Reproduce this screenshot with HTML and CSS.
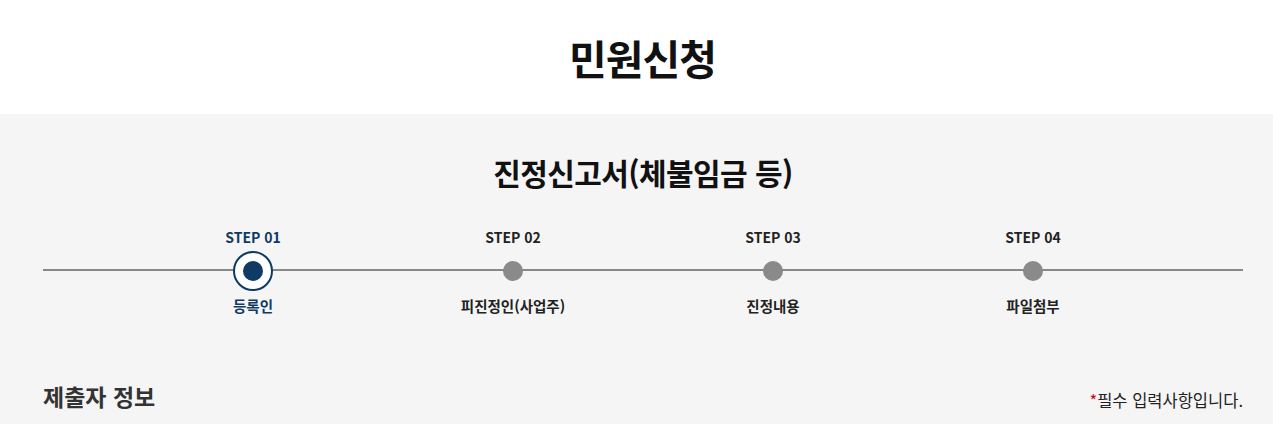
FILE: index.html
```html
<!DOCTYPE html>
<html lang="ko">
<head>
<meta charset="utf-8">
<title>민원신청</title>
<link rel="stylesheet" href="styles.css">
</head>
<body>
<header class="page-head">
  <h1 class="page-title">민원신청</h1>
</header>
<main class="content">
  <div class="wrap">
    <h2 class="form-title">진정신고서(체불임금 등)</h2>
    <ol class="steps">
      <li class="step active">
        <span class="step-num">STEP 01</span>
        <span class="marker"><span class="dot"></span></span>
        <span class="step-name">등록인</span>
      </li>
      <li class="step">
        <span class="step-num">STEP 02</span>
        <span class="marker"><span class="dot"></span></span>
        <span class="step-name">피진정인(사업주)</span>
      </li>
      <li class="step">
        <span class="step-num">STEP 03</span>
        <span class="marker"><span class="dot"></span></span>
        <span class="step-name">진정내용</span>
      </li>
      <li class="step">
        <span class="step-num">STEP 04</span>
        <span class="marker"><span class="dot"></span></span>
        <span class="step-name">파일첨부</span>
      </li>
    </ol>
    <div class="section-head">
      <h3 class="section-title">제출자 정보</h3>
      <p class="required-note"><span class="star">*</span>필수 입력사항입니다.</p>
    </div>
  </div>
</main>
</body>
</html>
```
FILE: styles.css
```css
* { box-sizing: border-box; }
html, body { margin: 0; padding: 0; }
body {
  font-family: "Noto Sans CJK KR", "Noto Sans", sans-serif;
  color: #222;
  background: #f5f5f5;
  height: 424px;
  overflow: hidden;
}
.page-head {
  background: #fff;
  height: 114px;
  display: flex;
  align-items: center;
  justify-content: center;
  padding-left: 12px;
}
.page-title {
  margin: 0;
  font-size: 41px;
  font-weight: 700;
  letter-spacing: -1px;
  color: #111;
  line-height: 1;
}
.content {
  background: #f5f5f5;
}
.wrap {
  width: 1200px;
  margin-left: 43px;
  padding-top: 38px;
}
.form-title {
  margin: 0;
  text-align: center;
  font-size: 30px;
  font-weight: 700;
  color: #111;
  line-height: 40px;
  letter-spacing: -0.6px;
}
.steps {
  list-style: none;
  margin: 0;
  padding: 0 80px;
  margin-top: 34px;
  display: flex;
  position: relative;
}
.steps::before {
  content: "";
  position: absolute;
  left: 0;
  right: 0;
  top: 43px;
  height: 2px;
  background: #888;
}
.step {
  flex: 1;
  display: flex;
  flex-direction: column;
  align-items: center;
  position: relative;
}
.step-num {
  font-size: 14px;
  font-weight: 700;
  line-height: 22px;
  color: #222;
}
.marker {
  width: 40px;
  height: 40px;
  margin-top: 3px;
  display: flex;
  align-items: center;
  justify-content: center;
  border-radius: 50%;
}
.dot {
  width: 20px;
  height: 20px;
  border-radius: 50%;
  background: #8a8a8a;
}
.active .marker {
  background: #fff;
  border: 2px solid #0f3a64;
}
.active .dot { background: #0f3a64; width: 20px; height: 20px; }
.active .step-num, .active .step-name { color: #0f3a64; }
.step-name {
  margin-top: 5px;
  font-size: 14.5px;
  font-weight: 700;
  line-height: 20px;
  color: #222;
}
.section-head {
  display: flex;
  justify-content: space-between;
  align-items: flex-end;
  margin-top: 65px;
}
.section-title {
  margin: 0;
  font-size: 23px;
  font-weight: 700;
  color: #333;
  line-height: 30px;
}
.required-note {
  margin: 0;
  font-size: 16.5px;
  color: #222;
  line-height: 22px;
}
.star { color: #d0021b; }
```
